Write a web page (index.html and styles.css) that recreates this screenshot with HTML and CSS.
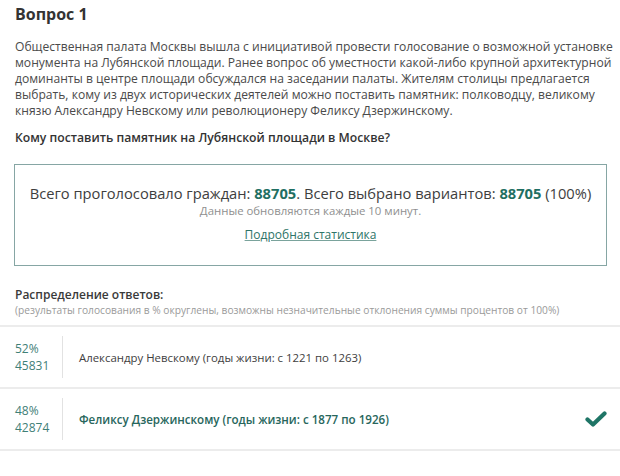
FILE: index.html
```html
<!DOCTYPE html>
<html lang="ru">
<head>
<meta charset="utf-8">
<link rel="stylesheet" href="styles.css">
</head>
<body>
<div class="page">
  <h1 class="title">Вопрос 1</h1>
  <p class="desc">Общественная палата Москвы вышла с инициативой провести голосование о возможной установке монумента на Лубянской площади. Ранее вопрос об уместности какой-либо крупной архитектурной доминанты в центре площади обсуждался на заседании палаты. Жителям столицы предлагается выбрать, кому из двух исторических деятелей можно поставить памятник: полководцу, великому князю Александру Невскому или революционеру Феликсу Дзержинскому.</p>
  <p class="question">Кому поставить памятник на Лубянской площади в Москве?</p>
  <div class="summary">
    <div class="totals">Всего проголосовало граждан: <b>88705</b>. Всего выбрано вариантов: <b>88705</b> (100%)</div>
    <div class="update">Данные обновляются каждые 10 минут.</div>
    <a class="stats" href="#">Подробная статистика</a>
  </div>
  <div class="dist">
    <div class="dist-title">Распределение ответов:</div>
    <div class="dist-note">(результаты голосования в % округлены, возможны незначительные отклонения суммы процентов от 100%)</div>
  </div>
  <div class="answers">
    <div class="answer">
      <div class="nums"><span>52%</span><span>45831</span></div>
      <div class="name">Александру Невскому (годы жизни: с 1221 по 1263)</div>
    </div>
    <div class="answer win">
      <div class="nums"><span>48%</span><span>42874</span></div>
      <div class="name">Феликсу Дзержинскому (годы жизни: с 1877 по 1926)</div>
      <svg class="check" width="22" height="18" viewBox="0 0 22 18"><path d="M2.5 9.5 L8 14.5 L19.5 3.5" fill="none" stroke="#1f7566" stroke-width="4.2" stroke-linecap="round" stroke-linejoin="round"/></svg>
    </div>
  </div>
</div>
</body>
</html>
```

FILE: styles.css
```css
html, body { margin: 0; padding: 0; background: #fff; }
body { font-family: "Open Sans", "Noto Sans", sans-serif; color: #3d3d3d; width: 620px; overflow: hidden; }
.title { margin: 0; padding: 3px 15px 0; font-size: 16px; line-height: 22px; font-weight: 700; color: #333; }
.desc { margin: 14px 0 0 15px; font-size: 12.1px; line-height: 16px; color: #4a4a4a; }
.question { margin: 11px 15px 0; font-size: 12.2px; line-height: 16px; font-weight: 600; color: #333; }
.summary { margin: 18px 13px 0 14px; border: 1px solid #86a6a4; height: 102px; box-sizing: border-box; text-align: center; padding-top: 18px; }
.totals { font-size: 14.7px; line-height: 20px; color: #3e3e3e; }
.totals b { color: #1f6f62; font-weight: 700; }
.update { font-size: 11.4px; line-height: 16px; color: #8f8f8f; }
.stats { display: inline-block; margin-top: 8px; font-size: 12px; line-height: 16px; color: #2e7468; text-decoration: underline; text-decoration-color: #7aa39c; }
.dist { padding: 21px 15px 8px; border-bottom: 2px solid #ececec; }
.dist-title { font-size: 12px; line-height: 16px; color: #3a3a3a; font-weight: 600; }
.dist-note { font-size: 10.2px; line-height: 14px; color: #9a9a9a; }
.answer { display: flex; align-items: center; height: 62px; box-sizing: border-box; border-bottom: 2px solid #ececec; padding: 9px 0 9px 15px; }
.nums { display: flex; flex-direction: column; width: 48px; height: 100%; justify-content: center; font-size: 12px; line-height: 17px; color: #3f8077; border-right: 1px solid #e2e2e2; box-sizing: border-box; }
.name { padding-left: 16px; font-size: 11.4px; color: #3e3e3e; flex: 1; }
.win .name { font-size: 11.6px; font-weight: 600; color: #27665c; }
.check { margin-right: 13px; }
```
